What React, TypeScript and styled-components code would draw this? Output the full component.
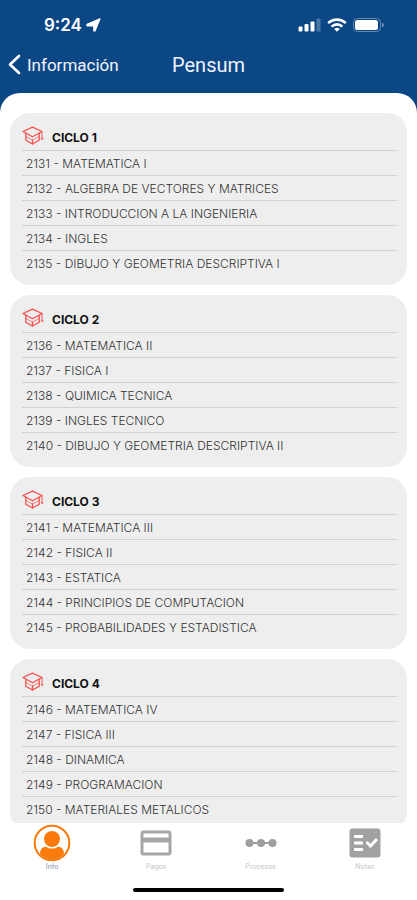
import React from "react";
import styled, { createGlobalStyle } from "styled-components";

const GlobalStyle = createGlobalStyle`
  *, *::before, *::after { box-sizing: border-box; }
  body { margin: 0; background: #0c4785; }
  button, a { font: inherit; color: inherit; }
`;

const Screen = styled.div`
  display: flex;
  flex-direction: column;
  height: 100vh;
  background: #0c4785;
  font-family: Inter, sans-serif;
`;

const StatusBar = styled.div`
  display: flex;
  align-items: center;
  justify-content: space-between;
  height: 50px;
  padding: 0 32px 0 44px;
  color: #fff;
`;

const Clock = styled.div`
  display: flex;
  align-items: center;
  gap: 4px;
  font-size: 17px;
  line-height: 20px;
  font-weight: 600;
`;

const StatusIcons = styled.div`
  display: flex;
  align-items: center;
  gap: 6px;
`;

const NavBar = styled.header`
  display: grid;
  grid-template-columns: 1fr auto 1fr;
  align-items: center;
  height: 43px;
  padding: 0 8px 14px;
  color: #f1f2fc;
  font-family: Roboto, sans-serif;
`;

const BackButton = styled.button`
  display: flex;
  align-items: center;
  justify-self: start;
  gap: 6px;
  padding: 0;
  border: 0;
  background: none;
  font-size: 17px;
  line-height: 24px;
  cursor: pointer;
`;

const Title = styled.h1`
  margin: 0;
  font-size: 20px;
  line-height: 24px;
  font-weight: 400;
`;

const Sheet = styled.main`
  display: flex;
  flex: 1;
  flex-direction: column;
  min-height: 0;
  padding: 20px 10px 0;
  border-radius: 20px 20px 0 0;
  background: #fff;
`;

const CycleList = styled.div`
  display: flex;
  flex: 1;
  flex-direction: column;
  gap: 10px;
  min-height: 0;
  overflow: hidden;
  border-radius: 0 0 4px 4px;
`;

const CycleCard = styled.section`
  flex: none;
  padding: 0 10px 10px 12px;
  border-radius: 20px;
  background: #eee;
`;

const CycleHeader = styled.div`
  display: flex;
  align-items: center;
  gap: 8px;
  height: 37px;
  padding-top: 9px;
`;

const CycleTitle = styled.h2`
  margin: 0;
  padding-top: 3px;
  color: #111;
  font-size: 12px;
  line-height: 16px;
  font-weight: 700;
`;

const CourseList = styled.ul`
  margin: 0;
  padding: 0;
  list-style: none;
`;

const Course = styled.li`
  height: 25px;
  padding-left: 4px;
  border-top: 1px solid #d2d2d2;
  color: #333;
  font-size: 12px;
  line-height: 25px;
  font-weight: 300;
  white-space: nowrap;
`;

const TabBar = styled.nav`
  display: grid;
  grid-template-columns: repeat(4, 1fr);
  height: 65px;
  background: #fff;
`;

const Tab = styled.a<{ $active?: boolean }>`
  display: flex;
  flex-direction: column;
  align-items: center;
  color: ${(p) => (p.$active ? "#8590ae" : "#c6c6c6")};
  font-size: 7px;
  line-height: 10px;
  text-decoration: none;
`;

const TabIcon = styled.span`
  display: flex;
  align-items: center;
  justify-content: center;
  height: 39px;
`;

const HomeArea = styled.div`
  display: flex;
  justify-content: center;
  height: 12px;
  background: #fff;
`;

const HomeIndicator = styled.div`
  width: 36%;
  height: 4px;
  border-radius: 2px;
  background: #000;
`;

const GradCap = () => (
  <svg width="22" height="20" viewBox="0 0 22 20" fill="none" stroke="#f8504c" strokeWidth="1.300" strokeLinejoin="round" strokeLinecap="round" aria-hidden="true">
    <path d="M10.500 1.200 20 5.500l-9.500 5.300L1 5.500z" />
    <path d="M3.800 7.500v6.700l6.700 3.800 6.700-3.800V7.500" />
    <path d="M10.500 14v4" />
    <path d="M4 10.500 10.500 14.200 17 10.500" strokeWidth="0.700" />
    <path d="M20 5.500V12" strokeWidth="1" />
    <circle cx="20" cy="12.800" r="0.800" strokeWidth="0.800" />
  </svg>
);

const InfoIcon = () => (
  <svg width="38" height="38" viewBox="0 0 38 38" aria-hidden="true">
    <circle cx="19" cy="19" r="17.300" fill="#fff" stroke="#fb7a0c" strokeWidth="2" />
    <circle cx="19" cy="15" r="8" fill="#fb7a0c" />
    <path d="M7 30c0-4.500 2.300-7.300 6-7.300 3.500 2.500 8.500 2.500 12 0 3.700 0 6 2.800 6 7.300a16.300 16.300 0 0 1-24 0z" fill="#fb7a0c" />
  </svg>
);

const CardIcon = () => (
  <svg width="32" height="26" viewBox="0 0 32 26" fill="#a6a6a6" aria-hidden="true">
    <path fillRule="evenodd" d="M3.500 0.500h25a3 3 0 0 1 3 3v19a3 3 0 0 1-3 3h-25a3 3 0 0 1-3-3v-19a3 3 0 0 1 3-3zM3.500 3.500v4h25v-4zM3.500 12.500v10h25v-10z" />
  </svg>
);

const StepsIcon = () => (
  <svg width="32" height="10" viewBox="0 0 32 10" fill="#9e9e9e" aria-hidden="true">
    <path d="M4 4h24v2H4z" />
    <circle cx="4.500" cy="5" r="4" />
    <circle cx="16" cy="5" r="4" />
    <circle cx="27.500" cy="5" r="4" />
  </svg>
);

const NotesIcon = () => (
  <svg width="32" height="30" viewBox="0 0 32 30" fill="none" stroke="#fff" strokeWidth="3" aria-hidden="true">
    <rect x="0.500" y="0.500" width="31" height="29" rx="3" fill="#a1a1a1" stroke="none" />
    <path d="M5 8.500h9M5 15h9M5 21.500h9" />
    <path d="m17.500 14 4 4 6.500-7" />
  </svg>
);

const cycles: { name: string; courses: string[] }[] = [
  {
    name: "CICLO 1",
    courses: [
      "2131 - MATEMATICA I",
      "2132 - ALGEBRA DE VECTORES Y MATRICES",
      "2133 - INTRODUCCION A LA INGENIERIA",
      "2134 - INGLES",
      "2135 - DIBUJO Y GEOMETRIA DESCRIPTIVA I",
    ],
  },
  {
    name: "CICLO 2",
    courses: [
      "2136 - MATEMATICA II",
      "2137 - FISICA I",
      "2138 - QUIMICA TECNICA",
      "2139 - INGLES TECNICO",
      "2140 - DIBUJO Y GEOMETRIA DESCRIPTIVA II",
    ],
  },
  {
    name: "CICLO 3",
    courses: [
      "2141 - MATEMATICA III",
      "2142 - FISICA II",
      "2143 - ESTATICA",
      "2144 - PRINCIPIOS DE COMPUTACION",
      "2145 - PROBABILIDADES Y ESTADISTICA",
    ],
  },
  {
    name: "CICLO 4",
    courses: [
      "2146 - MATEMATICA IV",
      "2147 - FISICA III",
      "2148 - DINAMICA",
      "2149 - PROGRAMACION",
      "2150 - MATERIALES METALICOS",
    ],
  },
];

const tabs = [
  { label: "Info", Icon: InfoIcon, active: true },
  { label: "Pagos", Icon: CardIcon },
  { label: "Procesos", Icon: StepsIcon },
  { label: "Notas", Icon: NotesIcon },
];

export default function App() {
  return (
    <>
      <GlobalStyle />
      <Screen>
        <StatusBar>
          <Clock>
            9:24
            <svg width="15" height="14" viewBox="0 0 15 14" fill="#fff" stroke="#fff" strokeWidth="1.200" strokeLinejoin="round" aria-hidden="true">
              <path d="M14 0.800 9 13H7.800V7.800H1V6.300z" />
            </svg>
          </Clock>
          <StatusIcons>
            <svg width="23" height="14" viewBox="0 0 23 14" fill="#fff" aria-hidden="true">
              <rect x="0.500" y="8.500" width="4" height="5" rx="1" />
              <rect x="6.500" y="6" width="4" height="7.500" rx="1" />
              <rect x="12.500" y="3.500" width="4" height="10" rx="1" />
              <rect x="18.500" y="0.500" width="4" height="13" rx="1" opacity="0.250" />
            </svg>
            <svg width="20" height="14" viewBox="0 0 20 14" fill="none" stroke="#fff" strokeWidth="2.600" aria-hidden="true">
              <path d="M1.200 5.200a12.500 12.500 0 0 1 17.600 0M4.600 8.600a7.600 7.600 0 0 1 10.800 0" />
              <path d="M10 13.800 7.200 11a4 4 0 0 1 5.600 0z" fill="#fff" stroke="none" />
            </svg>
            <svg width="32" height="14" viewBox="0 0 32 14" aria-hidden="true">
              <rect x="0.500" y="0.500" width="27" height="13" rx="4" fill="none" stroke="#fff" opacity="0.350" />
              <rect x="2" y="2" width="23" height="10" rx="2.500" fill="#fff" />
              <path d="M29 4.500c2.500 1 2.500 4 0 5z" fill="#fff" opacity="0.400" />
            </svg>
          </StatusIcons>
        </StatusBar>
        <NavBar>
          <BackButton type="button">
            <svg width="13" height="21" viewBox="0 0 13 21" fill="none" stroke="#fff" strokeWidth="2.600" strokeLinecap="round" strokeLinejoin="round" aria-hidden="true">
              <path d="M11 2 2 10.500 11 19" />
            </svg>
            Información
          </BackButton>
          <Title>Pensum</Title>
        </NavBar>
        <Sheet>
          <CycleList>
            {cycles.map((cycle) => (
              <CycleCard key={cycle.name}>
                <CycleHeader>
                  <GradCap />
                  <CycleTitle>{cycle.name}</CycleTitle>
                </CycleHeader>
                <CourseList>
                  {cycle.courses.map((course) => (
                    <Course key={course}>{course}</Course>
                  ))}
                </CourseList>
              </CycleCard>
            ))}
          </CycleList>
        </Sheet>
        <TabBar>
          {tabs.map(({ label, Icon, active }) => (
            <Tab key={label} href={`#${label.toLowerCase()}`} $active={active} aria-current={active ? "page" : undefined}>
              <TabIcon>
                <Icon />
              </TabIcon>
              {label}
            </Tab>
          ))}
        </TabBar>
        <HomeArea>
          <HomeIndicator />
        </HomeArea>
      </Screen>
    </>
  );
}
